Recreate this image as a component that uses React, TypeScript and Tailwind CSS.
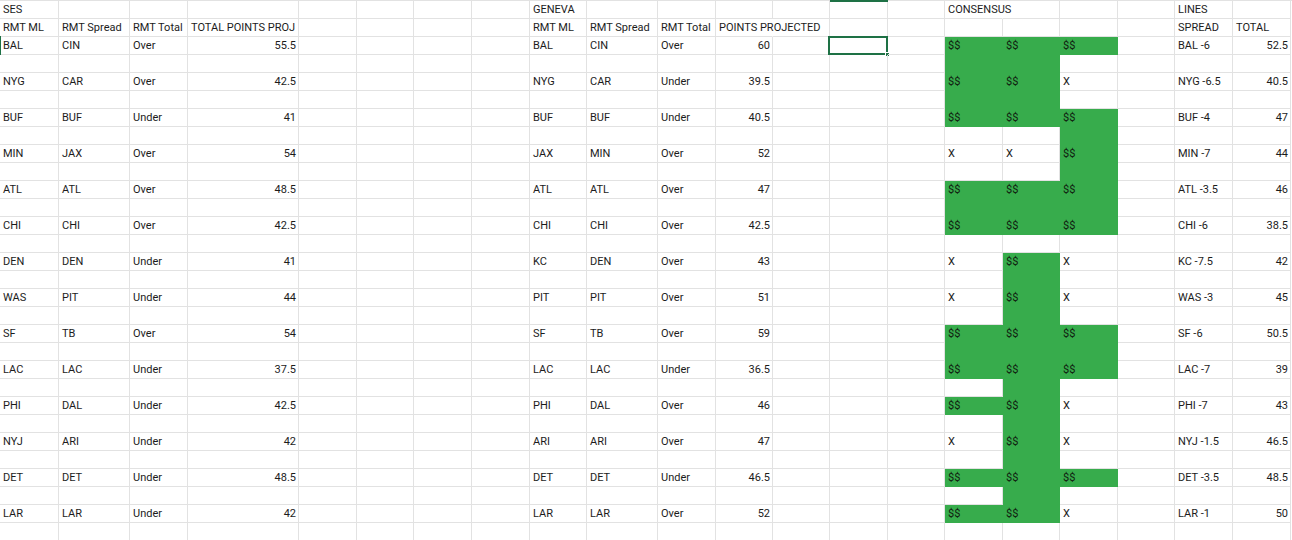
import React from 'react';

type Cell = {
  text?: string;
  right?: boolean;
  fill?: boolean;
  spill?: boolean;
};

const COLS = 21;
const ROWS = 30;

const ses = [
  ['BAL', 'CIN', 'Over', '55.5'],
  ['NYG', 'CAR', 'Over', '42.5'],
  ['BUF', 'BUF', 'Under', '41'],
  ['MIN', 'JAX', 'Over', '54'],
  ['ATL', 'ATL', 'Over', '48.5'],
  ['CHI', 'CHI', 'Over', '42.5'],
  ['DEN', 'DEN', 'Under', '41'],
  ['WAS', 'PIT', 'Under', '44'],
  ['SF', 'TB', 'Over', '54'],
  ['LAC', 'LAC', 'Under', '37.5'],
  ['PHI', 'DAL', 'Under', '42.5'],
  ['NYJ', 'ARI', 'Under', '42'],
  ['DET', 'DET', 'Under', '48.5'],
  ['LAR', 'LAR', 'Under', '42'],
];

const geneva = [
  ['BAL', 'CIN', 'Over', '60'],
  ['NYG', 'CAR', 'Under', '39.5'],
  ['BUF', 'BUF', 'Under', '40.5'],
  ['JAX', 'MIN', 'Over', '52'],
  ['ATL', 'ATL', 'Over', '47'],
  ['CHI', 'CHI', 'Over', '42.5'],
  ['KC', 'DEN', 'Over', '43'],
  ['PIT', 'PIT', 'Over', '51'],
  ['SF', 'TB', 'Over', '59'],
  ['LAC', 'LAC', 'Under', '36.5'],
  ['PHI', 'DAL', 'Over', '46'],
  ['ARI', 'ARI', 'Over', '47'],
  ['DET', 'DET', 'Under', '46.5'],
  ['LAR', 'LAR', 'Over', '52'],
];

// 1 = $$ (green), 0 = X
const consensus = [
  [1, 1, 1],
  [1, 1, 0],
  [1, 1, 1],
  [0, 0, 1],
  [1, 1, 1],
  [1, 1, 1],
  [0, 1, 0],
  [0, 1, 0],
  [1, 1, 1],
  [1, 1, 1],
  [1, 1, 0],
  [0, 1, 0],
  [1, 1, 1],
  [1, 1, 0],
];

// green fill on the spacer row below each game
const gaps = [
  [1, 1, 0],
  [1, 1, 0],
  [0, 0, 1],
  [0, 0, 1],
  [1, 1, 1],
  [0, 0, 0],
  [0, 1, 0],
  [0, 1, 0],
  [1, 1, 1],
  [0, 1, 0],
  [0, 1, 0],
  [0, 1, 0],
  [0, 1, 0],
  [0, 0, 0],
];

const lines = [
  ['BAL -6', '52.5'],
  ['NYG -6.5', '40.5'],
  ['BUF -4', '47'],
  ['MIN -7', '44'],
  ['ATL -3.5', '46'],
  ['CHI -6', '38.5'],
  ['KC -7.5', '42'],
  ['WAS -3', '45'],
  ['SF -6', '50.5'],
  ['LAC -7', '39'],
  ['PHI -7', '43'],
  ['NYJ -1.5', '46.5'],
  ['DET -3.5', '48.5'],
  ['LAR -1', '50'],
];

const buildSheet = () => {
  const sheet: Cell[][] = Array.from({ length: ROWS }, () =>
    Array.from({ length: COLS }, () => ({}))
  );

  sheet[0][0] = { text: 'SES' };
  sheet[0][8] = { text: 'GENEVA' };
  sheet[0][15] = { text: 'CONSENSUS', spill: true };
  sheet[0][19] = { text: 'LINES' };

  sheet[1][0] = { text: 'RMT ML' };
  sheet[1][1] = { text: 'RMT Spread' };
  sheet[1][2] = { text: 'RMT Total' };
  sheet[1][3] = { text: 'TOTAL POINTS PROJ' };
  sheet[1][8] = { text: 'RMT ML' };
  sheet[1][9] = { text: 'RMT Spread' };
  sheet[1][10] = { text: 'RMT Total' };
  sheet[1][11] = { text: 'POINTS PROJECTED', spill: true };
  sheet[1][19] = { text: 'SPREAD' };
  sheet[1][20] = { text: 'TOTAL' };

  ses.forEach((row, i) => {
    const r = 2 + i * 2;
    sheet[r][0] = { text: row[0] };
    sheet[r][1] = { text: row[1] };
    sheet[r][2] = { text: row[2] };
    sheet[r][3] = { text: row[3], right: true };

    const g = geneva[i];
    sheet[r][8] = { text: g[0] };
    sheet[r][9] = { text: g[1] };
    sheet[r][10] = { text: g[2] };
    sheet[r][11] = { text: g[3], right: true };

    consensus[i].forEach((v, j) => {
      sheet[r][15 + j] = v ? { text: '$$', fill: true } : { text: 'X' };
      if (gaps[i][j]) sheet[r + 1][15 + j] = { fill: true };
    });

    sheet[r][19] = { text: lines[i][0] };
    sheet[r][20] = { text: lines[i][1], right: true };
  });

  return sheet;
};

const App = () => {
  const sheet = buildSheet();

  return (
    <div
      className="w-[1292px] h-[540px] overflow-hidden bg-white text-[11px] text-[#1c1c1c]"
      style={{ fontFamily: 'Roboto, "Liberation Sans", Arial, sans-serif' }}
    >
      <div className="grid grid-cols-[59px_71px_58px_111px_58px_57px_58px_58px_57px_71px_58px_57px_57px_58px_57px_58px_57px_58px_57px_58px_58px] border-t border-[#e2e2e2]">
        {sheet.map((row, r) =>
          row.map((cell, c) => (
            <div
              key={`${r}-${c}`}
              className={clsx(
                'relative h-[18px] border-b border-r px-[3px] pt-px leading-[16px] whitespace-nowrap',
                cell.fill ? 'bg-[#37ac4c] border-[#37ac4c] text-[#10200f]' : 'border-[#e2e2e2]',
                cell.spill && 'border-r-transparent overflow-visible',
                cell.right ? 'text-right pr-[2px]' : 'text-left'
              )}
            >
              {cell.text}
              {r === 0 && c === 13 && (
                <span className="absolute -top-px left-0 right-[-1px] h-[2px] bg-[#1e7145]" />
              )}
              {r === 2 && c === 0 && (
                <span className="absolute left-0 -top-px bottom-[-1px] w-px bg-[#1e7145]" />
              )}
              {r === 2 && c === 13 && (
                <>
                  <span className="absolute left-[-2px] -top-px right-[-1px] bottom-[-1px] border-2 border-[#1e7145]" />
                  <span className="absolute right-[-3px] bottom-[-3px] w-[5px] h-[5px] bg-[#1e7145] border border-white" />
                </>
              )}
            </div>
          ))
        )}
      </div>
    </div>
  );
};

function clsx(...parts: (string | false | undefined)[]) {
  return parts.filter(Boolean).join(' ');
}

export default App;
